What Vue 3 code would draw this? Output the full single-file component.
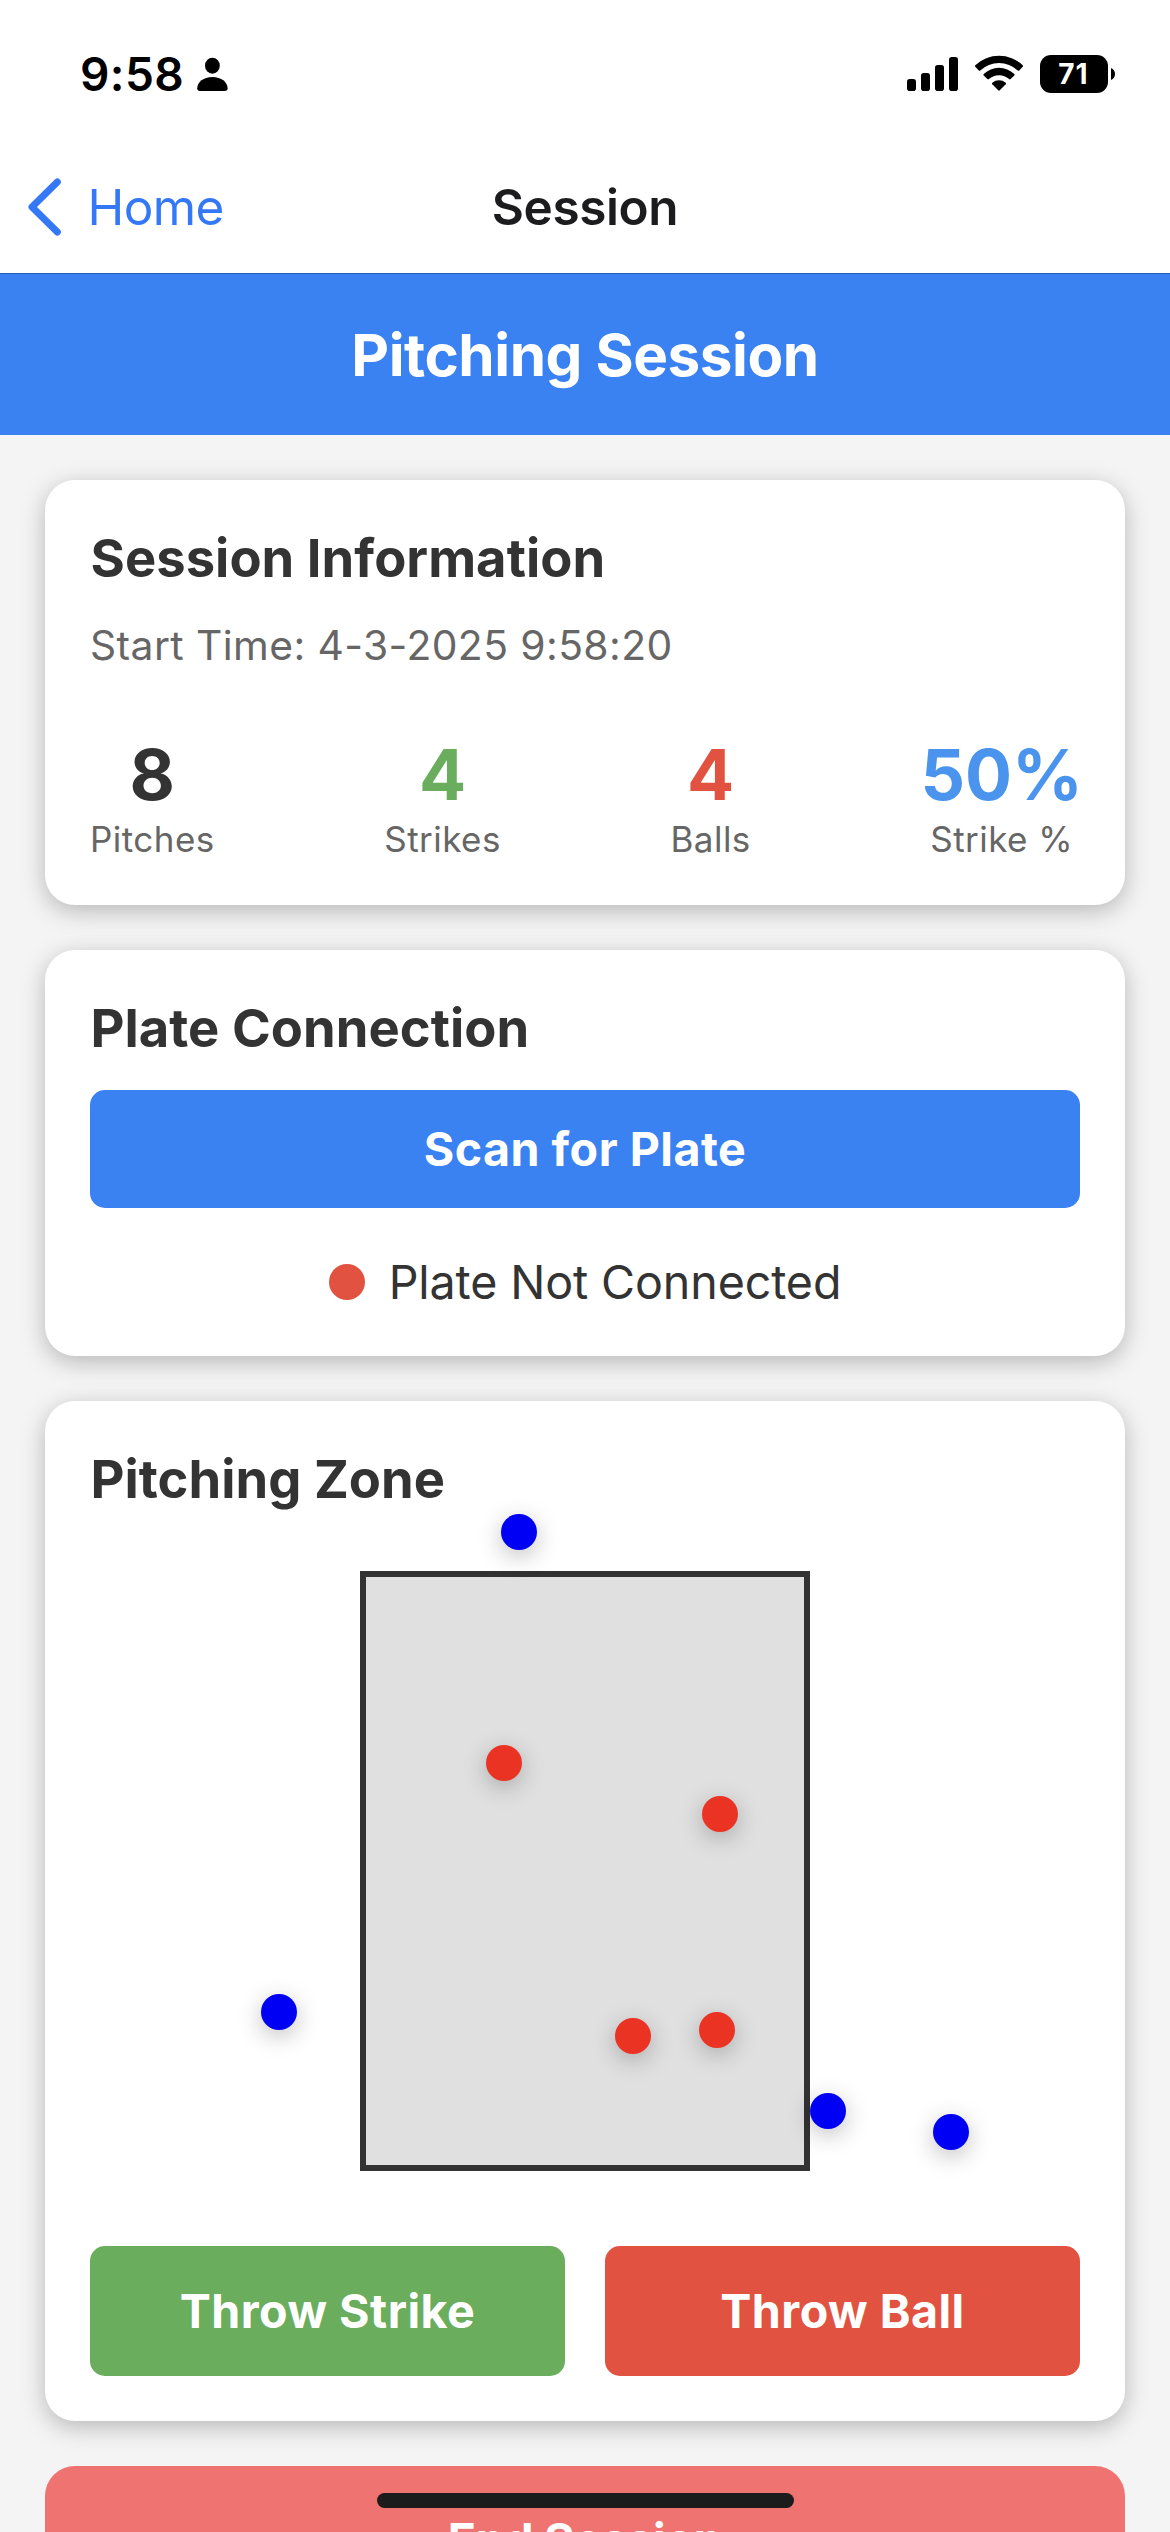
<script setup>
const stats = [
  { value: '8', label: 'Pitches', tone: 'dark' },
  { value: '4', label: 'Strikes', tone: 'green' },
  { value: '4', label: 'Balls', tone: 'red' },
  { value: '50%', label: 'Strike %', tone: 'blue' },
]

// Pitch positions relative to the strike zone's outer top-left corner.
const pitches = [
  { x: 141, y: -57, strike: false },
  { x: 126, y: 174, strike: true },
  { x: 342, y: 225, strike: true },
  { x: -99, y: 423, strike: false },
  { x: 255, y: 447, strike: true },
  { x: 339, y: 441, strike: true },
  { x: 450, y: 522, strike: false },
  { x: 573, y: 543, strike: false },
]
</script>

<template>
  <div class="screen">
    <header class="top">
      <div class="status">
        <div class="clock">
          <span class="time">9:58</span>
          <svg class="person" width="31" height="34" viewBox="0 0 31 34">
            <ellipse cx="15.4" cy="8.7" rx="7.4" ry="8" />
            <path d="M0.2 31.2C0.2 25.2 6.6 20 15.4 20C24.2 20 30.6 25.2 30.6 31.2C30.6 33 29.6 34 27.9 34H2.9C1.2 34 0.2 33 0.2 31.2Z" />
          </svg>
        </div>
        <div class="indicators">
          <svg width="51" height="38" viewBox="0 0 51 38">
            <rect x="0" y="24" width="9" height="12" rx="2.8" />
            <rect x="14" y="18" width="9" height="18" rx="2.8" />
            <rect x="28" y="10" width="9" height="26" rx="2.8" />
            <rect x="42" y="2" width="9" height="34" rx="2.8" />
          </svg>
          <svg class="wifi" width="50" height="38" viewBox="0 0 50 38">
            <path d="M1.3 10.2A34.5 34.5 0 0 1 48.7 10.2Q49.4 11 48.7 11.8L45.2 15.4Q44.5 16.1 43.7 15.4A27.5 27.5 0 0 0 6.3 15.4Q5.5 16.1 4.8 15.4L1.3 11.8Q0.6 11 1.3 10.2Z" />
            <path d="M9.7 18.9A22.3 22.3 0 0 1 40.3 18.9Q41 19.6 40.3 20.4L36.6 24.1Q35.9 24.8 35.1 24.1A14.9 14.9 0 0 0 14.9 24.1Q14.1 24.8 13.4 24.1L9.7 20.4Q9 19.6 9.7 18.9Z" />
            <path d="M18.3 27.7A10.5 10.5 0 0 1 31.7 27.7Q32.4 28.4 31.7 29.2L25.8 35.3Q25 36 24.2 35.3L18.3 29.2Q17.6 28.4 18.3 27.7Z" />
          </svg>
          <div class="battery"><span>71</span></div>
          <svg class="nub" width="4" height="12" viewBox="0 0 4 12">
            <path d="M0 0C2.5 1 4 3.2 4 6S2.5 11 0 12Z" />
          </svg>
        </div>
      </div>
      <nav class="nav">
        <a class="back">
          <svg width="35" height="60" viewBox="0 0 35 60">
            <path d="M30.3 5L5 30L30.3 55" fill="none" stroke="#3478f6" stroke-width="7" stroke-linecap="round" stroke-linejoin="round" />
          </svg>
          <span>Home</span>
        </a>
        <span class="nav-title">Session</span>
        <span></span>
      </nav>
    </header>

    <div class="banner">Pitching Session</div>

    <main class="content">
      <section class="card">
        <h2>Session Information</h2>
        <p class="start">Start Time: 4-3-2025 9:58:20</p>
        <div class="stats">
          <div v-for="s in stats" :key="s.label" class="stat">
            <span class="value" :class="s.tone">{{ s.value }}</span>
            <span class="label">{{ s.label }}</span>
          </div>
        </div>
      </section>

      <section class="card">
        <h2>Plate Connection</h2>
        <button class="btn scan">Scan for Plate</button>
        <div class="connection">
          <i class="light"></i>
          <span>Plate Not Connected</span>
        </div>
      </section>

      <section class="card">
        <h2>Pitching Zone</h2>
        <div class="zone">
          <i
            v-for="(p, i) in pitches"
            :key="i"
            class="pitch"
            :class="{ strike: p.strike }"
            :style="{ left: p.x - 6 + 'px', top: p.y - 6 + 'px' }"
          ></i>
        </div>
        <div class="actions">
          <button class="btn throw-strike">Throw Strike</button>
          <button class="btn throw-ball">Throw Ball</button>
        </div>
      </section>

      <button class="end">End Session</button>
    </main>

    <div class="home-indicator"></div>
  </div>
</template>

<style>
body {
  margin: 0;
  background: #f4f4f4;
  overflow: hidden;
}
</style>

<style scoped>
.screen {
  position: relative;
  width: 1170px;
  height: 2532px;
  overflow: hidden;
  background: #f4f4f4;
  font-family: Inter, 'Liberation Sans', sans-serif;
  color: #333;
}
svg {
  display: block;
  flex: none;
}
.top {
  background: #fff;
  border-bottom: 1px solid #205cb8;
}
.status {
  display: flex;
  justify-content: space-between;
  box-sizing: border-box;
  height: 141px;
  padding: 55px 55px 0 80px;
}
.clock {
  display: flex;
  height: 39px;
  align-items: center;
  color: #000;
}
.time {
  width: 117px;
  font-size: 46px;
  font-weight: 600;
  letter-spacing: 0.4px;
  line-height: 39px;
}
.person {
  margin-top: -1px;
}
.indicators {
  display: flex;
  height: 38px;
}
.wifi {
  margin-left: 16px;
}
.battery {
  width: 68px;
  height: 38px;
  margin-left: 16px;
  border-radius: 11px;
  background: #000;
  color: #fff;
  font-size: 28px;
  font-weight: 700;
  letter-spacing: 1px;
  line-height: 38px;
  text-align: center;
  text-indent: -1px;
}
.nub {
  margin: 13px 0 0 3px;
}
.nav {
  display: grid;
  grid-template-columns: 1fr auto 1fr;
  align-items: center;
  height: 132px;
  padding: 0 27px;
  line-height: 60px;
  font-size: 49.5px;
}
.back {
  display: flex;
  align-items: center;
  gap: 25.5px;
  color: #3478f6;
  letter-spacing: -0.6px;
}
.nav-title {
  color: #1c1c1e;
  font-weight: 600;
  letter-spacing: -0.39px;
}
.banner {
  height: 161px;
  background: #3a81f1;
  color: #fff;
  font-size: 58.4px;
  font-weight: 700;
  letter-spacing: -0.44px;
  line-height: 161px;
  text-align: center;
}
.content {
  display: flex;
  flex-direction: column;
  gap: 45px;
  padding: 45px;
}
.card {
  padding: 45px;
  border-radius: 30px;
  background: #fff;
  box-shadow: 0 6px 23px rgba(0, 0, 0, 0.25);
}
h2 {
  margin: 0;
  font-size: 52.5px;
  font-weight: 700;
  line-height: 66px;
  letter-spacing: 0.04px;
  text-indent: 0.5px;
}
.start {
  margin: 29px 0 61px;
  color: #666;
  font-size: 40.8px;
  line-height: 50px;
  letter-spacing: 0.42px;
}
.stats {
  display: flex;
  justify-content: space-between;
  margin-right: -3px;
}
.stat {
  display: flex;
  flex-direction: column;
  align-items: center;
}
.value {
  font-size: 69.8px;
  font-weight: 700;
  line-height: 88px;
}
.label {
  color: #666;
  font-size: 35px;
  line-height: 41px;
  letter-spacing: 0.45px;
}
.green {
  color: #69ad5d;
}
.red {
  color: #e15241;
}
.blue {
  color: #4a94ee;
}
.btn {
  display: block;
  margin: 0;
  padding: 0;
  border: 0;
  border-radius: 15px;
  color: #fff;
  font-family: inherit;
  font-size: 46.6px;
  font-weight: 700;
  letter-spacing: 0.48px;
}
.scan {
  width: 100%;
  height: 118px;
  margin-top: 29px;
  background: #3a81f1;
}
.connection {
  display: flex;
  align-items: center;
  justify-content: center;
  gap: 24px;
  height: 58px;
  margin-top: 45px;
  font-size: 46.6px;
  letter-spacing: -0.12px;
}
.light {
  width: 36px;
  height: 36px;
  border-radius: 50%;
  background: #e15241;
}
.zone {
  position: relative;
  box-sizing: border-box;
  width: 450px;
  height: 600px;
  margin: 59px auto 75px;
  border: 6px solid #333;
  background: #e0e0e0;
}
.pitch {
  position: absolute;
  width: 36px;
  height: 36px;
  border-radius: 50%;
  background: #0000f5;
  box-shadow: 0 6px 23px rgba(0, 0, 0, 0.25);
}
.pitch.strike {
  background: #eb3323;
}
.actions {
  display: flex;
  gap: 40px;
}
.actions .btn {
  flex: 1;
  height: 130px;
}
.throw-strike {
  background: #69ad5d;
}
.throw-ball {
  background: #e15241;
}
.end {
  height: 147px;
  flex: none;
  padding: 0;
  border: 0;
  border-radius: 30px;
  background: #ee7371;
  color: #fff;
  font-family: inherit;
  font-size: 46.6px;
  font-weight: 700;
  letter-spacing: -0.34px;
}
.home-indicator {
  position: absolute;
  left: 377px;
  bottom: 24px;
  width: 417px;
  height: 15px;
  border-radius: 8px;
  background: #1c1c1c;
}
</style>
